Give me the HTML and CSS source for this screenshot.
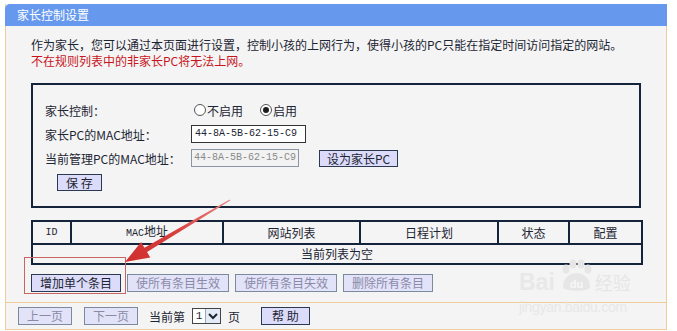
FILE: index.html
```html
<!DOCTYPE html>
<html lang="zh-CN">
<head>
  <meta charset="UTF-8">
  <title>家长控制设置</title>
  <link rel="stylesheet" href="styles.css">
</head>
<body>
  <div class="panel">
    <div class="title">家长控制设置</div>
    <div class="content">
      <p class="intro">作为家长，您可以通过本页面进行设置，控制小孩的上网行为，使得小孩的PC只能在指定时间访问指定的网站。</p>
      <p class="intro warn">不在规则列表中的非家长PC将无法上网。</p>

      <div class="box">
        <div class="row">
          <span class="label">家长控制：</span>
          <span class="radio"><span class="dot"></span>不启用</span>
          <span class="radio on"><span class="dot"></span>启用</span>
        </div>
        <div class="row">
          <span class="label">家长PC的MAC地址：</span>
          <span class="mac">44-8A-5B-62-15-C9</span>
        </div>
        <div class="row">
          <span class="label">当前管理PC的MAC地址：</span>
          <span class="mac current">44-8A-5B-62-15-C9</span>
          <button class="btn set">设为家长PC</button>
        </div>
        <div class="save-row">
          <button class="btn save">保 存</button>
        </div>
      </div>

      <table class="rules">
        <colgroup>
          <col style="width:39px"><col style="width:152px"><col style="width:137px">
          <col style="width:138px"><col style="width:71px"><col style="width:73px">
        </colgroup>
        <tr>
          <th class="latin">ID</th><th><span class="latin">MAC</span>地址</th><th>网站列表</th>
          <th>日程计划</th><th>状态</th><th>配置</th>
        </tr>
        <tr><td colspan="6">当前列表为空</td></tr>
      </table>

      <div class="actions">
        <button class="btn">增加单个条目</button>
        <button class="btn off">使所有条目生效</button>
        <button class="btn off">使所有条目失效</button>
        <button class="btn off">删除所有条目</button>
      </div>
    </div>

    <div class="pager">
      <button class="btn off">上一页</button>
      <button class="btn off next">下一页</button>
      <span class="page-text">当前第</span>
      <span class="select"><span class="val">1</span><span class="drop"><svg width="10" height="8" viewBox="0 0 10 8"><path d="M1 2 L5 6 L9 2" fill="none" stroke="#1c2533" stroke-width="2"/></svg></span></span>
      <span class="page-text">页</span>
      <button class="btn help">帮 助</button>
    </div>
  </div>

  <!-- annotation overlays -->
  <div class="mark"></div>
  <svg class="arrow" width="677" height="331" viewBox="0 0 677 331">
    <defs>
      <linearGradient id="ag" x1="230" y1="200" x2="125" y2="262" gradientUnits="userSpaceOnUse">
        <stop offset="0" stop-color="#e88a88"/>
        <stop offset="0.5" stop-color="#d9403e"/>
        <stop offset="1" stop-color="#cf2f2d"/>
      </linearGradient>
    </defs>
    <polygon points="125,262 150.3,257.5 147,252 230.3,200.4 229.7,199.6 144.4,247.7 141.1,242.1" fill="url(#ag)"/>
  </svg>

  <div class="watermark">
    <div class="wm-logo">
      <span class="wm-bai">Bai</span>
      <svg class="wm-paw" width="38" height="34" viewBox="0 0 38 34">
        <ellipse cx="9" cy="10" rx="3.5" ry="4.5" fill="#e6e6e6"/>
        <ellipse cx="16" cy="5" rx="3.5" ry="4.5" fill="#e6e6e6"/>
        <ellipse cx="24" cy="5" rx="3.5" ry="4.5" fill="#e6e6e6"/>
        <ellipse cx="31" cy="10" rx="3.5" ry="4.5" fill="#e6e6e6"/>
        <path d="M6 28 C6 18 14 14 19 14 C25 14 33 18 33 28 C33 33 6 33 6 28 Z" fill="#e6e6e6"/>
        <text x="19.5" y="29" text-anchor="middle" font-family="Liberation Sans, sans-serif" font-weight="bold" font-size="11" fill="#f8f8f8">du</text>
      </svg>
      <span class="wm-jy">经验</span>
    </div>
    <div class="wm-url">jingyan.baidu.com</div>
  </div>
</body>
</html>
```

FILE: styles.css
```css
body {
  margin: 0;
  background: #fff;
  font-family: "Noto Sans CJK SC", sans-serif;
  font-size: 12px;
  color: #1c2533;
}
.panel {
  margin: 4px 0 0 5px;
  width: 662px;
  box-sizing: border-box;
  background: #f4f4f4;
  border: 1px solid #f0cc9c;
  border-top: none;
}
.title {
  height: 22px;
  line-height: 22px;
  margin: 0 -1px;
  padding-left: 12px;
  background: #6699ee;
  color: #fff;
  border-radius: 5px 0 0 0;
}
.content {
  padding: 11px 0 0 25px;
}
.intro {
  margin: 0;
  line-height: 16px;
}
.warn {
  color: #c8141e;
}
.box {
  margin-top: 14px;
  width: 610px;
  box-sizing: border-box;
  border: 2px solid #14243a;
  padding: 13px 0 14px 12px;
}
.row {
  display: flex;
  align-items: center;
  height: 24px;
}
.label {
  width: 146px;
}
.radio {
  display: inline-flex;
  align-items: center;
  gap: 1px;
  margin-left: 3px;
  margin-right: 17px;
}
.radio + .radio {
  margin-left: 0;
}
.dot {
  width: 12px;
  height: 12px;
  box-sizing: border-box;
  border: 1px solid #555;
  border-radius: 50%;
  background: #fff;
  position: relative;
}
.radio.on .dot::after {
  content: "";
  position: absolute;
  left: 2px;
  top: 2px;
  width: 6px;
  height: 6px;
  border-radius: 50%;
  background: #1c1c1c;
}
.mac {
  display: block;
  width: 115px;
  height: 18px;
  box-sizing: border-box;
  padding-left: 3px;
  border: 1px solid #333;
  background: #fff;
  font-family: "Liberation Mono", monospace;
  font-size: 10px;
  line-height: 16px;
  white-space: nowrap;
  color: #1c2533;
}
.mac.current {
  width: 108px;
  padding-left: 2px;
  border-color: #8a95a3;
  background: #f2f2f2;
  color: #8a8a8a;
}
.btn {
  height: 18px;
  box-sizing: border-box;
  margin: 0;
  padding: 0 8px;
  border: 1px solid #2b3a52;
  background: #dcdcfa;
  font-family: "Noto Sans CJK SC", sans-serif;
  font-size: 12px;
  line-height: 16px;
  color: #1c2533;
}
.btn.off {
  color: #8a8aa8;
  border-color: #7c8aa0;
  background: #e2e2f8;
}
.btn.set {
  margin-left: 20px;
  height: 17px;
  padding: 0 7px;
}
.save-row {
  margin-top: 4px;
  height: 18px;
}
.btn.save {
  margin-left: 12px;
  height: 17px;
  padding: 0 8px;
}
.rules {
  margin-top: 12px;
  width: 610px;
  table-layout: fixed;
  border-collapse: collapse;
  border: 2px solid #14243a;
}
.rules th,
.rules td {
  height: 18px;
  padding: 0;
  line-height: 18px;
  border: 2px solid #14243a;
  font-weight: normal;
  text-align: center;
}
.latin {
  font-family: "Liberation Mono", monospace;
  font-size: 10px;
}
.actions {
  display: flex;
  gap: 6px;
  margin-top: 9px;
  margin-bottom: 10px;
}
.pager {
  display: flex;
  align-items: center;
  padding: 4px 0 4px 12px;
  border-top: 1px solid #f0cc9c;
}
.pager .next {
  margin-left: 12px;
}
.page-text {
  margin-left: 11px;
}
.select {
  display: inline-flex;
  margin-left: 7px;
  width: 29px;
  height: 16px;
  box-sizing: border-box;
  border: 1px solid #444;
  background: #fff;
}
.select + .page-text {
  margin-left: 7px;
}
.select .val {
  width: 12px;
  line-height: 14px;
  text-align: center;
  font-family: "Liberation Mono", monospace;
  font-size: 11px;
}
.select .drop {
  flex: 1;
  display: flex;
  align-items: center;
  justify-content: center;
  border-left: 1px solid #9aa9c0;
  background: #e4ebf6;
}
.btn.help {
  margin-left: 21px;
  padding: 0 10px;
}
.mark {
  position: absolute;
  left: 24px;
  top: 257px;
  width: 100px;
  height: 35px;
  border: 1px solid #c86464;
}
.arrow {
  position: absolute;
  left: 0;
  top: 0;
  pointer-events: none;
}
.watermark {
  position: absolute;
  left: 519px;
  top: 257px;
}
.wm-logo {
  display: flex;
  align-items: flex-end;
  height: 36px;
}
.wm-bai {
  font-family: "Liberation Sans", sans-serif;
  font-weight: bold;
  font-size: 23px;
  line-height: 22px;
  color: #e8e8e8;
}
.wm-paw {
  margin: 0 0 0 2px;
}
.wm-jy {
  font-size: 18px;
  line-height: 22px;
  color: #e6e6e6;
}
.wm-url {
  margin-top: 8px;
  font-family: "Liberation Sans", sans-serif;
  font-size: 14px;
  line-height: 12px;
  letter-spacing: -0.3px;
  color: #e8e8e8;
}
```
